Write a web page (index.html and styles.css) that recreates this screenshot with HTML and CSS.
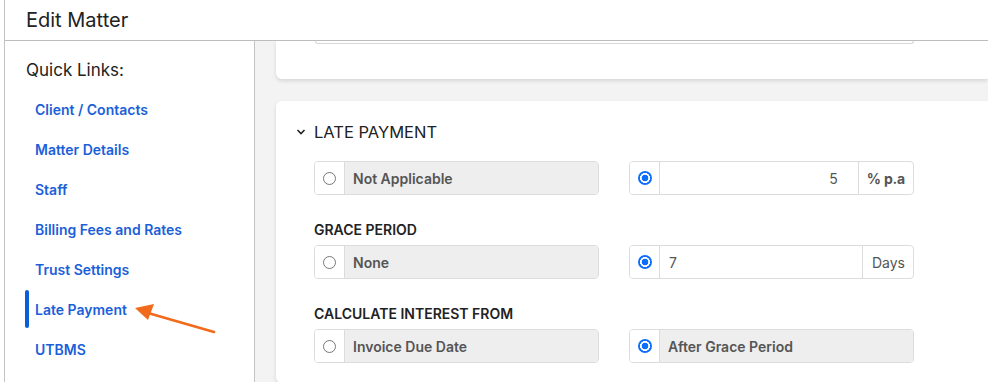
FILE: index.html
```html
<!DOCTYPE html>
<html lang="en">
<head>
  <meta charset="UTF-8" />
  <title>Edit Matter</title>
  <link rel="stylesheet" href="styles.css">
</head>
<body>
  <div class="frame">
    <header class="page-header">
      <h1>Edit Matter</h1>
    </header>

    <div class="layout">
      <aside class="sidebar">
        <h2>Quick Links:</h2>
        <ul class="quick-links">
          <li><a href="#client">Client / Contacts</a></li>
          <li><a href="#matter">Matter Details</a></li>
          <li><a href="#staff">Staff</a></li>
          <li><a href="#billing">Billing Fees and Rates</a></li>
          <li><a href="#trust">Trust Settings</a></li>
          <li class="active">
            <a href="#late">Late Payment</a>
            <!-- callout arrow -->
            <svg class="callout" width="90" height="34" viewBox="0 0 90 34">
              <line x1="82" y1="29" x2="16" y2="10" stroke="#f26a1b" stroke-width="2.6" stroke-linecap="round"/>
              <polygon points="3,5 22,1 16,17" fill="#f26a1b"/>
            </svg>
          </li>
          <li><a href="#utbms">UTBMS</a></li>
        </ul>
      </aside>

      <main class="content">
        <section class="card card-cut">
          <div class="cut-field"></div>
        </section>

        <section class="card" id="late">
          <h3 class="section-title">
            <svg width="10" height="8" viewBox="0 0 10 8"><path d="M1.5 2 L5 5.5 L8.5 2" fill="none" stroke="#222" stroke-width="1.6"/></svg>
            LATE PAYMENT
          </h3>

          <div class="field-row">
            <div class="group">
              <span class="radio-cell"><span class="radio"></span></span>
              <span class="text-cell">Not Applicable</span>
            </div>
            <div class="group">
              <span class="radio-cell"><span class="radio checked"></span></span>
              <span class="input-cell right">5</span>
              <span class="addon bold">% p.a</span>
            </div>
          </div>

          <label class="field-label">GRACE PERIOD</label>
          <div class="field-row">
            <div class="group">
              <span class="radio-cell"><span class="radio"></span></span>
              <span class="text-cell">None</span>
            </div>
            <div class="group">
              <span class="radio-cell"><span class="radio checked"></span></span>
              <span class="input-cell">7</span>
              <span class="addon">Days</span>
            </div>
          </div>

          <label class="field-label">CALCULATE INTEREST FROM</label>
          <div class="field-row">
            <div class="group">
              <span class="radio-cell"><span class="radio"></span></span>
              <span class="text-cell">Invoice Due Date</span>
            </div>
            <div class="group">
              <span class="radio-cell"><span class="radio checked"></span></span>
              <span class="text-cell">After Grace Period</span>
            </div>
          </div>
        </section>
      </main>
    </div>
  </div>
</body>
</html>
```

FILE: styles.css
```css
*, *::before, *::after {
  box-sizing: border-box;
}
html, body {
  margin: 0;
  padding: 0;
  height: 100%;
  overflow: hidden;
}
body {
  font-family: Inter, "Noto Sans", sans-serif;
  color: #222;
  background: #fff;
}

.frame {
  margin-left: 4px;
  border-left: 1px solid #c4c4c4;
  height: 100%;
  display: flex;
  flex-direction: column;
}

/* Header */
.page-header {
  flex: none;
  height: 41px;
  border-bottom: 1px solid #bdbdbd;
  padding-left: 21px;
  display: flex;
  align-items: center;
}
.page-header h1 {
  margin: 0;
  font-size: 20px;
  font-weight: 400;
  color: #222;
}

.layout {
  flex: 1;
  min-height: 0;
  display: flex;
}

/* Sidebar */
.sidebar {
  width: 250px;
  flex: none;
  border-right: 1px solid #c4c4c4;
  padding: 18px 0 0 0;
}
.sidebar h2 {
  margin: 0 0 0 21px;
  font-size: 17px;
  font-weight: 400;
  line-height: 22px;
  color: #222;
}
.quick-links {
  list-style: none;
  margin: 8px 0 0 0;
  padding: 0;
}
.quick-links li {
  position: relative;
  height: 40px;
  display: flex;
  align-items: center;
  padding-left: 30px;
}
.quick-links a {
  color: #1b5fd9;
  text-decoration: none;
  font-size: 14px;
  font-weight: 600;
}
.quick-links li.active::before {
  content: "";
  position: absolute;
  left: 20px;
  top: 1px;
  width: 4px;
  height: 38px;
  border-radius: 2px;
  background: #0b5ed7;
}
.callout {
  position: absolute;
  left: 127px;
  top: 14px;
}

/* Content */
.content {
  flex: 1;
  background: #f3f3f3;
  padding-left: 21px;
  overflow: hidden;
}
.card {
  background: #fff;
  border-radius: 6px 0 0 6px;
  box-shadow: 0 2px 4px rgba(0, 0, 0, 0.12);
  padding: 19px 0 20px 38px;
  margin-bottom: 22px;
}
.card-cut {
  height: 38px;
  padding-top: 0;
  border-radius: 0 0 0 6px;
}
.cut-field {
  width: 599px;
  height: 3px;
  margin-left: 1px;
  border: 1px solid #d6d6d6;
  border-top: none;
  border-radius: 0 0 4px 4px;
}

.section-title {
  margin: 0 0 17px -18px;
  font-size: 16.5px;
  font-weight: 400;
  line-height: 24px;
  display: flex;
  align-items: center;
  gap: 8px;
}

.field-label {
  display: block;
  margin: 27px 0 7px 0;
  font-size: 14px;
  font-weight: 600;
  line-height: 16px;
  color: #222;
}

.field-row {
  display: flex;
  gap: 30px;
}
.group {
  width: 285px;
  height: 34px;
  display: flex;
  border: 1px solid #dcdcdc;
  border-radius: 4px;
  overflow: hidden;
  font-size: 14px;
  color: #555;
}
.radio-cell {
  width: 30px;
  flex: none;
  display: flex;
  align-items: center;
  justify-content: center;
  border-right: 1px solid #dcdcdc;
  background: #fff;
}
.radio {
  width: 13px;
  height: 13px;
  border-radius: 50%;
  border: 1px solid #777;
  background: #fff;
}
.radio.checked {
  width: 14px;
  height: 14px;
  border: none;
  background: radial-gradient(circle, #0d6efd 0 3.2px, #fff 3.6px 4.8px, #0d6efd 5.2px);
}
.text-cell {
  flex: 1;
  background: #eeeeee;
  display: flex;
  align-items: center;
  padding-left: 8px;
  font-weight: 600;
}
.input-cell {
  flex: 1;
  display: flex;
  align-items: center;
  padding: 0 9px;
}
.input-cell.right {
  justify-content: flex-end;
  padding-right: 20px;
}
.addon {
  flex: none;
  display: flex;
  align-items: center;
  padding: 0 8px 0 9px;
  border-left: 1px solid #dcdcdc;
}
.addon.bold {
  font-weight: 700;
  padding: 0 8px 0 8px;
  letter-spacing: -0.2px;
}
```
